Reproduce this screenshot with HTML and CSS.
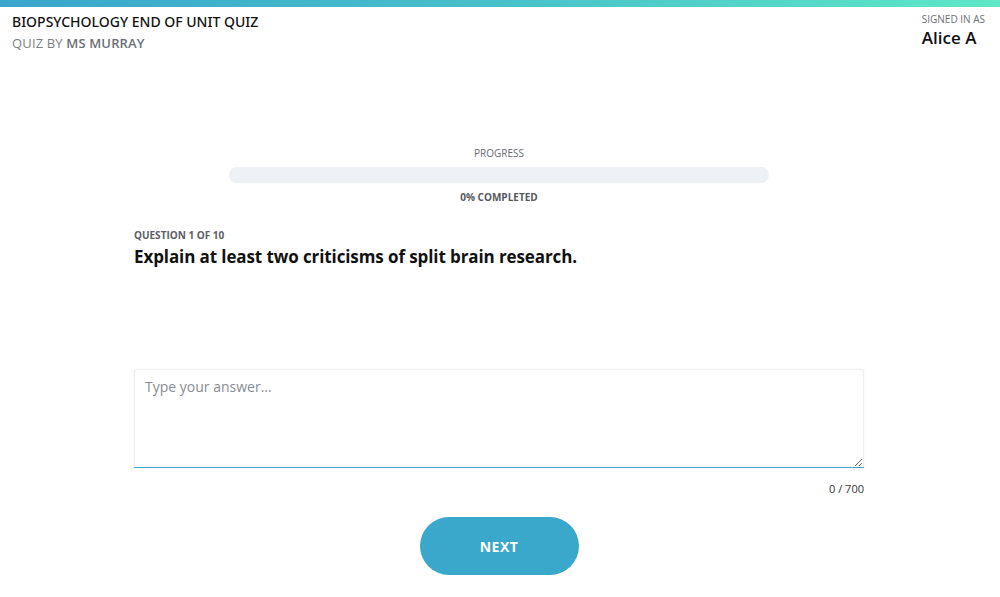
FILE: index.html
```html
<!DOCTYPE html>
<html>
<head>
<meta charset="utf-8">
<link rel="stylesheet" href="styles.css">
</head>
<body>
<div class="topbar"></div>
<header class="header">
  <div class="quiz-info">
    <div class="quiz-title">BIOPSYCHOLOGY END OF UNIT QUIZ</div>
    <div class="quiz-by">QUIZ BY <strong>MS MURRAY</strong></div>
  </div>
  <div class="user">
    <div class="signed">SIGNED IN AS</div>
    <div class="user-name">Alice A</div>
  </div>
</header>
<main class="main">
  <section class="progress">
    <div class="progress-label">PROGRESS</div>
    <div class="progress-track"><div class="progress-fill" style="width:0%"></div></div>
    <div class="progress-done">0% COMPLETED</div>
  </section>
  <section class="question">
    <div class="q-num">QUESTION 1 OF 10</div>
    <h1 class="q-text">Explain at least two criticisms of split brain research.</h1>
  </section>
  <section class="answer">
    <div class="answer-field">
      <textarea class="answer-box" placeholder="Type your answer..."></textarea>
    </div>
    <div class="counter">0 / 700</div>
  </section>
  <div class="actions">
    <button class="next">NEXT</button>
  </div>
</main>
</body>
</html>
```
FILE: styles.css
```css
* { box-sizing: border-box; }
html, body { margin: 0; padding: 0; }
body {
  font-family: "Open Sans", "Noto Sans", sans-serif;
  color: #111;
  background: #fff;
  width: 1000px;
  height: 597px;
  overflow: hidden;
}
.topbar {
  height: 7px;
  background: linear-gradient(90deg, #3aa6cc 0%, #48c0ca 50%, #5ee8c6 100%);
}
.header {
  display: flex;
  justify-content: space-between;
  padding: 5px 15px 0 12px;
}
.quiz-title {
  font-family: "Noto Sans", "Lato", sans-serif;
  font-size: 14px;
  font-weight: 500;
  letter-spacing: 0;
  color: #111;
  line-height: 18px;
  margin-top: 1px;
}
.quiz-by {
  font-size: 13px;
  letter-spacing: 0.15px;
  color: #7a7f85;
  line-height: 18px;
  margin-top: 3px;
}
.quiz-by strong { font-weight: 600; color: #6b7076; }
.user { text-align: left; padding-top: 0; }
.signed {
  font-size: 10px;
  color: #6b7076;
  line-height: 14px;
}
.user-name {
  font-size: 17px;
  font-weight: 600;
  line-height: 22px;
  margin-top: 1px;
}
.main {
  width: 730px;
  margin: 0 0 0 134px;
  padding-top: 94px;
}
.progress {
  display: flex;
  flex-direction: column;
  align-items: center;
}
.progress-label {
  font-size: 10px;
  color: #666a70;
  line-height: 14px;
}
.progress-track {
  width: 540px;
  height: 16px;
  border-radius: 8px;
  background: #edf1f5;
  margin-top: 7px;
  overflow: hidden;
}
.progress-fill { height: 100%; background: #3aa6cc; }
.progress-done {
  font-size: 10px;
  font-weight: 700;
  color: #555a60;
  line-height: 14px;
  margin-top: 7px;
}
.question { margin-top: 24px; }
.q-num {
  font-size: 10px;
  font-weight: 700;
  color: #5b6066;
  line-height: 14px;
}
.q-text {
  margin: 3px 0 0;
  font-size: 17px;
  font-weight: 700;
  letter-spacing: -0.1px;
  line-height: 24px;
  color: #111;
}
.answer { margin-top: 100px; }
.answer-field {
  border-bottom: 1px solid #3aa6cc;
  box-shadow: 0 0 3px rgba(0,0,0,0.05);
  border-radius: 3px 3px 0 0;
}
.answer-box {
  display: block;
  -webkit-appearance: none;
  appearance: none;
  width: 100%;
  height: 98px;
  margin: 0;
  border: 1px solid #eeeeee;
  border-bottom: none;
  border-radius: 3px 3px 0 0;
  padding: 7px 10px;
  font-family: "Open Sans", sans-serif;
  font-size: 14px;
  color: #222;
  background: #fff;
  resize: vertical;
  outline: none;
  vertical-align: top;
}
.answer-box::placeholder { color: #888c92; }
.counter {
  text-align: right;
  font-size: 11px;
  color: #333;
  line-height: 14px;
  margin-top: 14px;
}
.actions {
  display: flex;
  justify-content: center;
  margin-top: 21px;
}
.next {
  width: 159px;
  height: 58px;
  border: none;
  border-radius: 29px;
  background: #3aa8cb;
  color: #fff;
  font-family: "Open Sans", sans-serif;
  font-size: 14px;
  font-weight: 700;
  letter-spacing: 0.5px;
  cursor: pointer;
}
```
